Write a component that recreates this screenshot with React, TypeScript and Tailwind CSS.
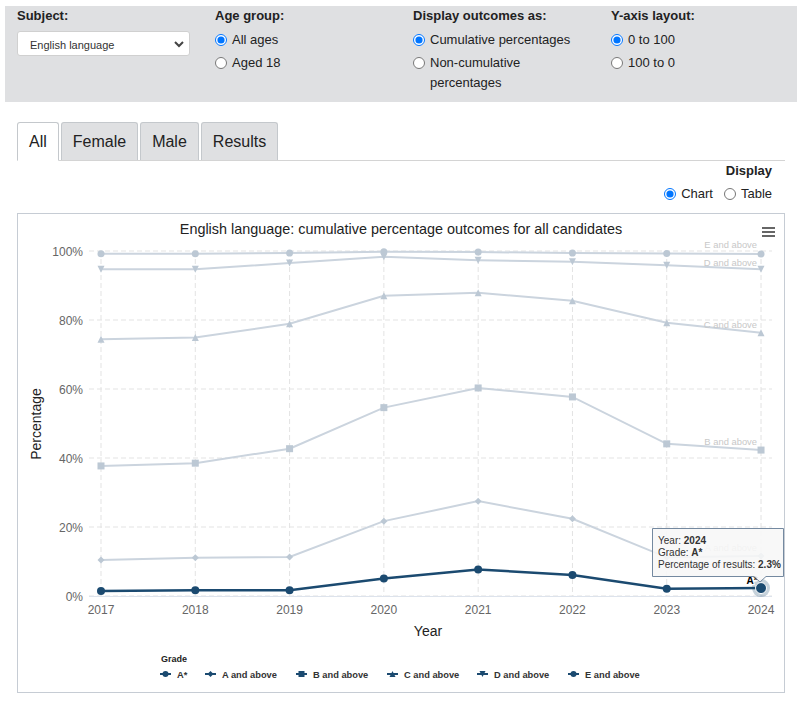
import React from 'react';

const years = [2017, 2018, 2019, 2020, 2021, 2022, 2023, 2024];
const xs = years.map((_, i) => 101 + i * 94.29);
const yOf = (v: number) => 596 - v * 3.45;

type Shape = 'circle' | 'diamond' | 'square' | 'triangle' | 'triangle-down';

const series: { name: string; shape: Shape; data: number[]; label?: number }[] = [
  { name: 'E and above', shape: 'circle', data: [99.2, 99.2, 99.4, 99.8, 99.7, 99.4, 99.3, 99.1], label: 248 },
  { name: 'D and above', shape: 'triangle-down', data: [94.7, 94.7, 96.5, 98.3, 97.3, 96.9, 95.9, 94.7], label: 266 },
  { name: 'C and above', shape: 'triangle', data: [74.4, 74.9, 78.9, 87.0, 87.9, 85.6, 79.2, 76.3], label: 328 },
  { name: 'B and above', shape: 'square', data: [37.7, 38.5, 42.7, 54.6, 60.3, 57.7, 44.1, 42.3], label: 445 },
  { name: 'A and above', shape: 'diamond', data: [10.4, 11.1, 11.3, 21.7, 27.5, 22.4, 11.2, 11.6], label: 551 },
];

const aStar = [1.45, 1.7, 1.7, 5.1, 7.7, 6.1, 2.1, 2.3];

const Marker = ({ shape, x, y, r, fill }: { shape: Shape; x: number; y: number; r: number; fill: string }) => {
  if (shape === 'circle') return <circle cx={x} cy={y} r={r} fill={fill} />;
  if (shape === 'square') return <rect x={x - r} y={y - r} width={r * 2} height={r * 2} fill={fill} />;
  if (shape === 'diamond')
    return <polygon points={`${x},${y - r} ${x + r},${y} ${x},${y + r} ${x - r},${y}`} fill={fill} />;
  if (shape === 'triangle')
    return <polygon points={`${x},${y - r} ${x + r},${y + r} ${x - r},${y + r}`} fill={fill} />;
  return <polygon points={`${x - r},${y - r} ${x + r},${y - r} ${x},${y + r}`} fill={fill} />;
};

const Radio = ({ name, label, checked }: { name: string; label: React.ReactNode; checked?: boolean }) => (
  <label className="flex items-start gap-[5px] text-[13px] leading-[20px] text-[#222]">
    <input type="radio" name={name} defaultChecked={checked} className="m-0 mt-[4px] h-[12px] w-[12px] shrink-0" />
    <span>{label}</span>
  </label>
);

const Chart = () => {
  const light = '#cbd4de';
  const lightMarker = '#bcc8d4';
  const dark = '#1b4a70';
  const path = (d: number[]) => d.map((v, i) => `${i ? 'L' : 'M'}${xs[i]} ${yOf(v)}`).join(' ');
  const legend = [
    { name: 'A*', shape: 'circle' as Shape, x: 160 },
    { name: 'A and above', shape: 'diamond' as Shape, x: 205 },
    { name: 'B and above', shape: 'square' as Shape, x: 296 },
    { name: 'C and above', shape: 'triangle' as Shape, x: 387 },
    { name: 'D and above', shape: 'triangle-down' as Shape, x: 477 },
    { name: 'E and above', shape: 'circle' as Shape, x: 568 },
  ];

  return (
    <svg
      width={766}
      height={478}
      viewBox="18 214 766 478"
      className="block"
      style={{ fontFamily: '"Liberation Sans", Arial, sans-serif' }}
    >
      <text x={401} y={234} textAnchor="middle" fontSize={14.4} fill="#222">
        English language: cumulative percentage outcomes for all candidates
      </text>

      {/* menu */}
      <g stroke="#666" strokeWidth={2}>
        <line x1={762} y1={228} x2={775} y2={228} />
        <line x1={762} y1={232} x2={775} y2={232} />
        <line x1={762} y1={236} x2={775} y2={236} />
      </g>

      {/* grid */}
      {[0, 20, 40, 60, 80, 100].map((v) => (
        <g key={v}>
          <line x1={89} x2={772} y1={yOf(v)} y2={yOf(v)} stroke="#e3e3e3" strokeDasharray="5 3" />
          <text x={83} y={yOf(v) + 4.5} textAnchor="end" fontSize={12} fill="#666">
            {v}%
          </text>
        </g>
      ))}
      {xs.map((x, i) => (
        <g key={i}>
          <line x1={x} x2={x} y1={251} y2={596} stroke="#e3e3e3" strokeDasharray="5 3" />
          <text x={x} y={614} textAnchor="middle" fontSize={12} fill="#666">
            {years[i]}
          </text>
        </g>
      ))}
      <line x1={89} x2={772} y1={596.5} y2={596.5} stroke="#dde3ec" />

      <text x={428} y={636} textAnchor="middle" fontSize={14} fill="#222">
        Year
      </text>
      <text x={0} y={0} transform="translate(41 424) rotate(-90)" textAnchor="middle" fontSize={14} fill="#222">
        Percentage
      </text>

      {/* faded series */}
      {series.map((s) => (
        <g key={s.name}>
          <path d={path(s.data)} fill="none" stroke={light} strokeWidth={2} />
          {s.data.map((v, i) => (
            <Marker key={i} shape={s.shape} x={xs[i]} y={yOf(v)} r={3.5} fill={lightMarker} />
          ))}
          <text x={757} y={s.label} textAnchor="end" fontSize={9.4} fill="#c8c8c8">
            {s.name}
          </text>
        </g>
      ))}

      {/* A* */}
      <path d={path(aStar)} fill="none" stroke={dark} strokeWidth={2.5} />
      {aStar.slice(0, 7).map((v, i) => (
        <circle key={i} cx={xs[i]} cy={yOf(v)} r={4} fill={dark} />
      ))}
      <circle cx={xs[7]} cy={yOf(aStar[7])} r={9} fill={dark} opacity={0.25} />
      <circle cx={xs[7]} cy={yOf(aStar[7])} r={5.5} fill={dark} stroke="#fff" strokeWidth={1} />
      <text
        x={752}
        y={584}
        textAnchor="middle"
        fontSize={10}
        fontWeight="bold"
        fill="#000"
        stroke="#fff"
        strokeWidth={2}
        style={{ paintOrder: 'stroke' }}
      >
        A*
      </text>

      {/* tooltip */}
      <path
        d="M652.5 528.5 H783.5 V576.5 H766 L760 582 L754 576.5 H652.5 Z"
        fill="rgba(247,247,247,0.88)"
        stroke="#7489a0"
      />
      <g fontSize={10} fill="#333">
        <text x={658} y={544}>
          Year: <tspan fontWeight="bold">2024</tspan>
        </text>
        <text x={658} y={556}>
          Grade: <tspan fontWeight="bold">A*</tspan>
        </text>
        <text x={658} y={568}>
          Percentage of results: <tspan fontWeight="bold">2.3%</tspan>
        </text>
      </g>

      {/* legend */}
      <text x={161} y={661.5} fontSize={9} fontWeight="bold" fill="#222">
        Grade
      </text>
      {legend.map((l) => (
        <g key={l.name}>
          <line x1={l.x} x2={l.x + 11} y1={674} y2={674} stroke={dark} strokeWidth={2} />
          <Marker shape={l.shape} x={l.x + 5.5} y={674} r={3} fill={dark} />
          <text x={l.x + 17} y={677.5} fontSize={9.3} fontWeight="bold" fill="#333">
            {l.name}
          </text>
        </g>
      ))}
    </svg>
  );
};

export default function App() {
  const tabs = ['All', 'Female', 'Male', 'Results'];
  return (
    <div className="min-h-[703px] bg-white font-['Liberation_Sans',Arial,sans-serif] text-[#222]">
      {/* controls */}
      <div className="mx-[5px] mt-[6px] grid h-[96px] grid-cols-[198px_198px_198px_198px] bg-[#dfe0e2] pl-[12px] pt-[1px]">
        <div>
          <div className="text-[13px] font-bold leading-[18px]">Subject:</div>
          <div className="relative mt-[6px] h-[25px] w-[173px] rounded-[3px] border border-[#d0d0d0] bg-white">
            <select className="h-full w-full appearance-none bg-transparent pl-[12px] text-[11px] text-[#333] outline-none">
              <option>English language</option>
            </select>
            <svg className="pointer-events-none absolute right-[5px] top-[8px]" width="10" height="8" viewBox="0 0 10 8">
              <path d="M1 2 L5 6 L9 2" fill="none" stroke="#444" strokeWidth="2" />
            </svg>
          </div>
        </div>
        <div>
          <div className="text-[13px] font-bold leading-[18px]">Age group:</div>
          <div className="mt-[5px] flex flex-col gap-[3px]">
            <Radio name="age" label="All ages" checked />
            <Radio name="age" label="Aged 18" />
          </div>
        </div>
        <div>
          <div className="text-[13px] font-bold leading-[18px]">Display outcomes as:</div>
          <div className="mt-[5px] flex w-[160px] flex-col gap-[3px]">
            <Radio name="outcome" label="Cumulative percentages" checked />
            <Radio name="outcome" label="Non-cumulative percentages" />
          </div>
        </div>
        <div>
          <div className="text-[13px] font-bold leading-[18px]">Y-axis layout:</div>
          <div className="mt-[5px] flex flex-col gap-[3px]">
            <Radio name="axis" label="0 to 100" checked />
            <Radio name="axis" label="100 to 0" />
          </div>
        </div>
      </div>

      {/* tabs */}
      <div className="mx-[17px] mt-[20px] flex gap-[2px] border-b border-[#d4d4d4]">
        {tabs.map((t, i) => (
          <div
            key={t}
            className={
              i === 0
                ? '-mb-px flex h-[39px] items-center rounded-t-[3px] border border-b-white border-[#c4c8cc] bg-white px-[11px] text-[16px] text-[#222]'
                : 'flex h-[38px] items-center rounded-t-[3px] border border-b-0 border-[#c4c8cc] bg-[#dfe0e2] px-[11px] text-[16px] text-[#222]'
            }
          >
            {t}
          </div>
        ))}
      </div>

      {/* display toggle */}
      <div className="mx-[17px] flex flex-col items-end pr-[13px] pt-[1px]">
        <div className="text-[13px] font-bold leading-[18px]">Display</div>
        <div className="mt-[4px] flex gap-[11px]">
          <Radio name="display" label="Chart" checked />
          <Radio name="display" label="Table" />
        </div>
      </div>

      {/* chart */}
      <div className="mx-[17px] mt-[9px] h-[480px] border border-[#c6ccd4]">
        <Chart />
      </div>
    </div>
  );
}
